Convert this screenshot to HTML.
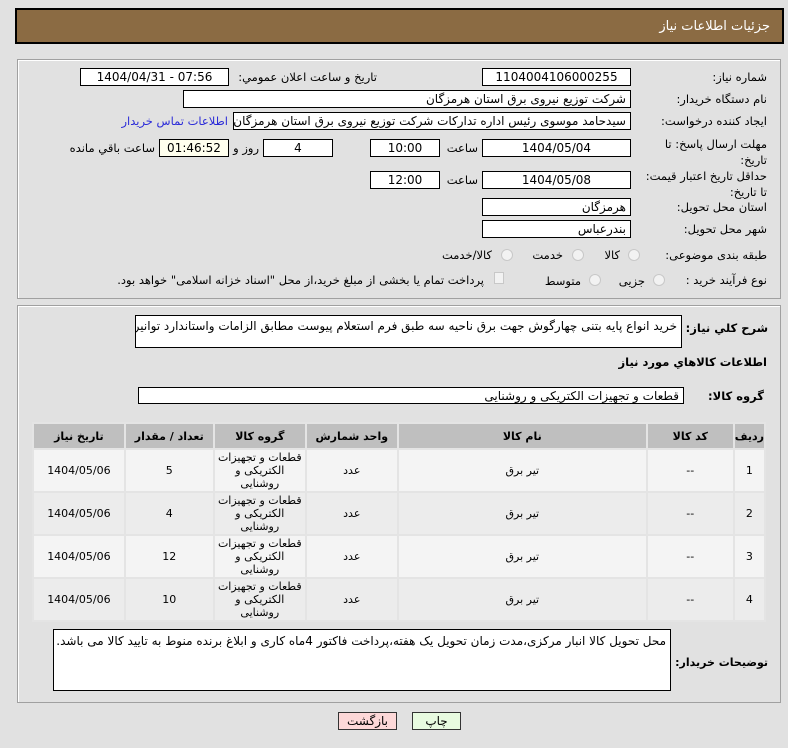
<!DOCTYPE html>
<html><head><meta charset="utf-8"><style>
*{margin:0;padding:0;box-sizing:border-box}
body{width:788px;height:748px;background:#e1e1e1;font-family:"DejaVu Sans","Liberation Sans",sans-serif;font-size:11.5px;color:#000;position:relative;overflow:hidden}
.a{position:absolute;white-space:nowrap}
.hdr{left:15px;top:8px;width:769px;height:36px;background:#8b6b43;border:2px solid #000;}
.hdr span{position:absolute;right:12px;top:9px;color:#fff;font-size:13px}
.panel{border:1px solid #a0a0a0;box-shadow:inset 1px 1px 0 #fff;}
.in{position:absolute;background:#fff;border:1px solid #000;height:18px;font-size:12px;line-height:16px;text-align:center;white-space:nowrap;overflow:hidden}
.r{text-align:right;padding-right:4px;direction:rtl}
.lbl{position:absolute;direction:rtl;text-align:right;white-space:nowrap}
.rad{position:absolute;width:12px;height:12px;border-radius:50%;border:1px solid #c8c8c8;background:#f2f2f2}
table{position:absolute;left:32px;top:422px;width:734px;border-collapse:separate;border-spacing:2px;background:#e4e4e4;direction:rtl}
th{background:#bfbfbf;height:24px;font-weight:bold;font-size:11px}
td{text-align:center;font-size:11px;height:41px;line-height:13px}
tr.o td{background:#f4f4f4}tr.e td{background:#ececec}
</style></head><body>
<div class="a hdr"><span>جزئیات اطلاعات نیاز</span></div>
<div class="a panel" style="left:17px;top:59px;width:764px;height:240px"></div>
<div class="a panel" style="left:17px;top:305px;width:764px;height:398px"></div>

<div class="lbl" style="right:21px;top:70px">شماره نیاز:</div>
<div class="in" style="left:482px;top:68px;width:149px">1104004106000255</div>
<div class="lbl" style="right:411px;top:70px">تاريخ و ساعت اعلان عمومي:</div>
<div class="in" style="left:80px;top:68px;width:149px">1404/04/31 - 07:56</div>

<div class="lbl" style="right:21px;top:92px">نام دستگاه خریدار:</div>
<div class="in r" style="left:183px;top:90px;width:448px">شرکت توزیع نیروی برق استان هرمزگان</div>

<div class="lbl" style="right:21px;top:114px">ایجاد کننده درخواست:</div>
<div class="in r" style="left:233px;top:112px;width:398px">سیدحامد موسوی رئیس اداره تدارکات شرکت توزیع نیروی برق استان هرمزگان</div>
<div class="lbl" style="right:560px;top:114px;color:#2b2bd8">اطلاعات تماس خریدار</div>

<div class="lbl" style="right:21px;top:136px;line-height:16px;text-align:right">مهلت ارسال پاسخ: تا<br>تاریخ:</div>
<div class="in" style="left:482px;top:139px;width:149px">1404/05/04</div>
<div class="lbl" style="right:310px;top:141px">ساعت</div>
<div class="in" style="left:370px;top:139px;width:70px">10:00</div>
<div class="in" style="left:263px;top:139px;width:70px">4</div>
<div class="lbl" style="right:529px;top:141px">روز و</div>
<div class="in" style="left:159px;top:139px;width:70px;background:#ffffee">01:46:52</div>
<div class="lbl" style="right:633px;top:141px">ساعت باقي مانده</div>

<div class="lbl" style="right:21px;top:168px;line-height:16px">حداقل تاریخ اعتبار قیمت:<br>تا تاریخ:</div>
<div class="in" style="left:482px;top:171px;width:149px">1404/05/08</div>
<div class="lbl" style="right:310px;top:173px">ساعت</div>
<div class="in" style="left:370px;top:171px;width:70px">12:00</div>

<div class="lbl" style="right:21px;top:200px">استان محل تحویل:</div>
<div class="in r" style="left:482px;top:198px;width:149px">هرمزگان</div>
<div class="lbl" style="right:21px;top:222px">شهر محل تحویل:</div>
<div class="in r" style="left:482px;top:220px;width:149px">بندرعباس</div>

<div class="lbl" style="right:21px;top:248px">طبقه بندی موضوعی:</div>
<div class="rad" style="left:628px;top:249px"></div><div class="lbl" style="right:168px;top:248px">کالا</div>
<div class="rad" style="left:572px;top:249px"></div><div class="lbl" style="right:225px;top:248px">خدمت</div>
<div class="rad" style="left:501px;top:249px"></div><div class="lbl" style="right:296px;top:248px">کالا/خدمت</div>

<div class="lbl" style="right:21px;top:273px">نوع فرآیند خرید :</div>
<div class="rad" style="left:653px;top:274px"></div><div class="lbl" style="right:143px;top:274px">جزیی</div>
<div class="rad" style="left:589px;top:274px"></div><div class="lbl" style="right:207px;top:274px">متوسط</div>
<div class="a" style="left:494px;top:272px;width:10px;height:12px;border:1px solid #c8c8c8;background:#f2f2f2"></div>
<div class="lbl" style="right:304px;top:273px">پرداخت تمام یا بخشی از مبلغ خرید،از محل "اسناد خزانه اسلامی" خواهد بود.</div>

<div class="lbl" style="right:20px;top:321px;font-weight:bold;font-size:11.5px">شرح كلي نياز:</div>
<div class="in r" style="left:135px;top:315px;width:547px;height:33px;text-align:right;line-height:16px;padding-top:2px">خرید انواع پایه بتنی چهارگوش جهت برق ناحیه سه طبق فرم استعلام پیوست مطابق الزامات واستاندارد توانیر</div>

<div class="lbl" style="right:21px;top:355px;font-weight:bold">اطلاعات كالاهاي مورد نياز</div>
<div class="lbl" style="right:24px;top:389px;font-weight:bold">گروه کالا:</div>
<div class="in r" style="left:138px;top:387px;width:546px;height:17px">قطعات و تجهیزات الکتریکی و روشنایی</div>

<table>
<tr><th style="width:25px">رديف</th><th style="width:85px">کد کالا</th><th style="width:247px">نام کالا</th><th style="width:90px">واحد شمارش</th><th style="width:90px">گروه کالا</th><th style="width:87px">تعداد / مقدار</th><th>تاريخ نياز</th></tr>
<tr class="o"><td>1</td><td>--</td><td>تیر برق</td><td>عدد</td><td>قطعات و تجهیزات<br>الکتریکی و<br>روشنایی</td><td>5</td><td>1404/05/06</td></tr>
<tr class="e"><td>2</td><td>--</td><td>تیر برق</td><td>عدد</td><td>قطعات و تجهیزات<br>الکتریکی و<br>روشنایی</td><td>4</td><td>1404/05/06</td></tr>
<tr class="o"><td>3</td><td>--</td><td>تیر برق</td><td>عدد</td><td>قطعات و تجهیزات<br>الکتریکی و<br>روشنایی</td><td>12</td><td>1404/05/06</td></tr>
<tr class="e"><td>4</td><td>--</td><td>تیر برق</td><td>عدد</td><td>قطعات و تجهیزات<br>الکتریکی و<br>روشنایی</td><td>10</td><td>1404/05/06</td></tr>
</table>

<div class="lbl" style="right:20px;top:656px;font-weight:bold;font-size:11px">توضیحات خریدار:</div>
<div class="in r" style="left:53px;top:629px;width:618px;height:62px;text-align:right;line-height:16px;padding-top:3px">محل تحویل کالا انبار مرکزی،مدت زمان تحویل یک هفته،پرداخت فاکتور 4ماه کاری و ابلاغ برنده منوط به تایید کالا می باشد.</div>

<div class="in" style="left:338px;top:712px;width:59px;height:18px;background:#fdd8d8;border-color:#333">بازگشت</div>
<div class="in" style="left:412px;top:712px;width:49px;height:18px;background:#e8fbe0;border-color:#333">چاپ</div>
</body></html>
